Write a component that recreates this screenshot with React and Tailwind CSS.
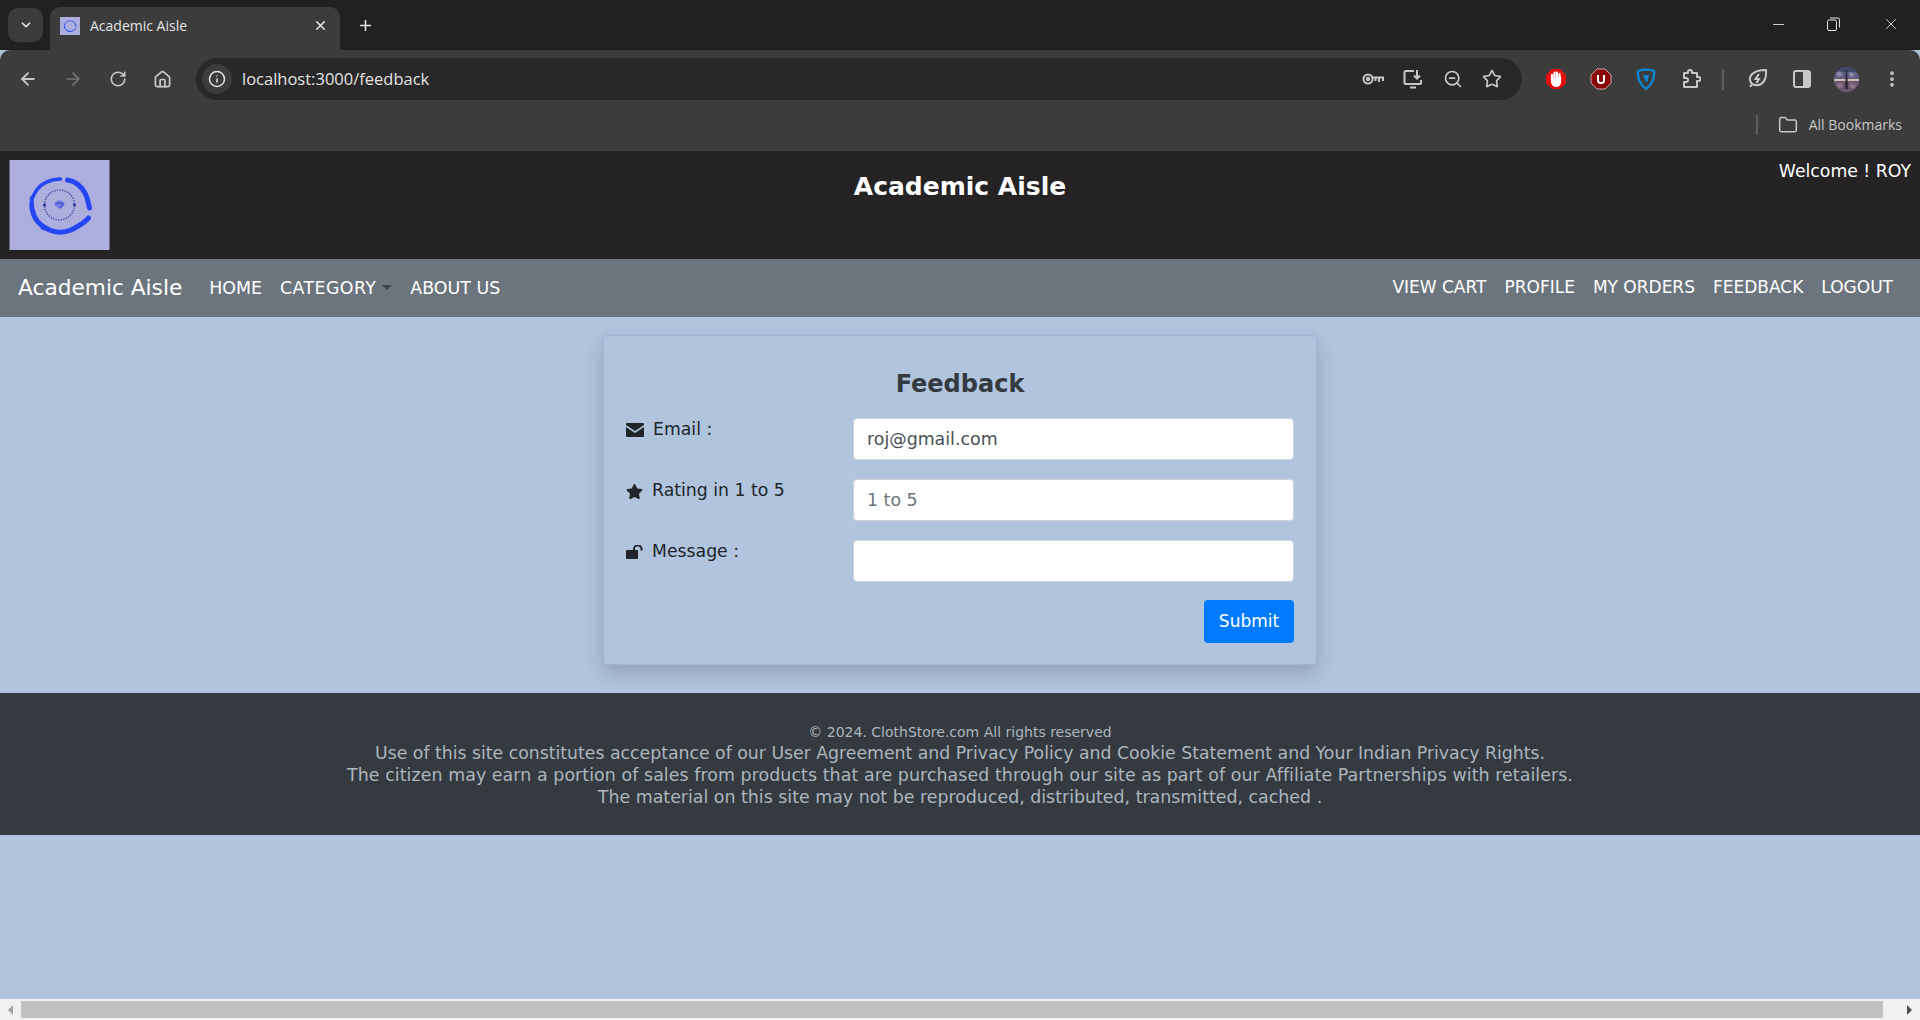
import { ArrowLeft, ArrowRight, RotateCw, Home, Info, Star, ZoomOut, Folder, ChevronDown, X, Plus, Minus, EllipsisVertical } from "lucide-react";
import { FaStar } from "react-icons/fa";

const pageFont = "font-['DejaVu_Sans',sans-serif]";

function LogoMark({ small }) {
  return (
    <svg viewBox="0 0 100 90" className={small ? "h-[20px] w-[20px]" : "h-[90px] w-[101px]"}>
      <rect width="100" height="90" fill="#adadde" />
      <g fill="none" stroke="#2546f5" strokeLinecap="round" className="blur-[0.5px]">
        <path d="M51 19 C42 19 31 23 26 32 C22 38 21 45 22 50" strokeWidth="3.5" />
        <path d="M23 50 C24 58 30 66 40 70 C49 74 60 72 67 67 C72 64 76 62 79 58" strokeWidth="5" />
        <path d="M58 20 C65 21 72 26 76 34 C79 40 79 45 80 48" strokeWidth="5" />
        <path d="M22 38 L23 48 M33 68 L48 72" strokeWidth="3.5" />
      </g>
      {!small && (
        <>
          <circle cx="50" cy="45" r="15" fill="none" stroke="#4f58ad" strokeWidth="1.6" strokeDasharray="1.4 1.2" />
          <circle cx="35" cy="45" r="1.4" fill="#1c2a8f" />
          <circle cx="65" cy="45" r="1.4" fill="#1c2a8f" />
          <ellipse cx="50" cy="44" rx="5" ry="3.5" fill="#6f7be0" />
          <path d="M46 44 Q50 41 54 44 Q52 49 49 48" fill="none" stroke="#3945c8" strokeWidth="1" />
        </>
      )}
    </svg>
  );
}

function TabStrip() {
  return (
    <div className="flex h-[50px] items-end bg-[#202222] pl-2 text-[#e3e3e3]">
      <div className="mb-[8px] flex h-[34px] w-[35px] items-center justify-center rounded-[10px] bg-[#3c3c3c]">
        <ChevronDown size={14} strokeWidth={3} />
      </div>
      <div className="ml-[7px] flex h-[43px] w-[290px] items-center rounded-t-[10px] bg-[#3c3c3c] pb-[6px] pl-[10px] pr-[12px]">
        <LogoMark small />
        <span className="ml-[10px] flex-1 font-['Open_Sans',sans-serif] text-[14px]">Academic Aisle</span>
        <X size={15} strokeWidth={2.5} />
      </div>
      <div className="mb-[16px] ml-[17px]"><Plus size={17} strokeWidth={2.2} /></div>
      <div className="mb-[17px] ml-auto flex items-center pr-[20px]">
        <Minus size={17} strokeWidth={1.3} />
        <svg width="13" height="14" viewBox="0 0 13 14" fill="none" stroke="#e3e3e3" className="ml-[40px]"><rect x="0.5" y="3" width="9" height="10.5" rx="1.5" /><path d="M3 1 h8 a1.5 1.5 0 0 1 1.5 1.5 v8" /></svg>
        <X size={18} strokeWidth={1.2} className="ml-[42px]" />
      </div>
    </div>
  );
}

function Cell({ w, children, className = "" }) {
  return <div className={`flex items-center justify-center ${w} ${className}`}>{children}</div>;
}

function Avatar() {
  return (
    <svg width="25" height="25" viewBox="0 0 25 25">
      <clipPath id="avatar-clip"><circle cx="12.5" cy="12.5" r="12.5" /></clipPath>
      <g clipPath="url(#avatar-clip)">
        <rect width="25" height="25" fill="#5f5f82" />
        <rect x="0" y="0" width="25" height="5" fill="#44466a" />
        <path d="M2 6 L6 4 L9 8 L4 10 Z M16 5 L21 7 L19 10 L15 9 Z" fill="#8d86a6" />
        <rect x="0" y="12" width="25" height="2" fill="#d2bdb4" />
        <rect x="0" y="14" width="25" height="11" fill="#6e5870" />
        <path d="M12 3 L13 3 L14 22 L11 22 Z" fill="#2c2638" />
        <path d="M3 17 L8 16 L9 20 L4 21 Z M16 16 L22 18 L20 22 L16 20 Z" fill="#8d7486" />
      </g>
    </svg>
  );
}

function Toolbar() {
  return (
    <div className="flex h-[59px] items-start rounded-t-[10px] bg-[#3c3c3c] pt-[8px] text-[#c7c7c7]">
      <div className="flex h-[42px] items-center pl-[5px]">
        <Cell w="w-[45px]"><ArrowLeft size={20} strokeWidth={2.2} /></Cell>
        <Cell w="w-[45px]"><ArrowRight size={20} strokeWidth={2} className="text-[#767676]" /></Cell>
        <Cell w="w-[45px]"><RotateCw size={18} strokeWidth={2.2} /></Cell>
        <Cell w="w-[45px]"><Home size={19} strokeWidth={2.2} /></Cell>
      </div>
      <div className="ml-[11px] flex h-[42px] w-[1326px] items-center rounded-full bg-[#282828] pl-[6px] pr-[10px]">
        <div className="flex h-[30px] w-[30px] items-center justify-center rounded-full bg-[#3c3c3c] text-[#e3e3e3]">
          <Info size={18} strokeWidth={2} />
        </div>
        <span className="ml-[10px] font-['Open_Sans',sans-serif] text-[16.5px] text-[#e3e3e3]">localhost:3000/feedback</span>
        <div className="ml-auto flex items-center">
          <Cell w="w-[40px]"><svg width="22" height="16" viewBox="0 0 22 16" fill="none" stroke="#c7c7c7" strokeWidth="2"><circle cx="6" cy="8" r="4.5" /><circle cx="6" cy="8" r="1.2" /><path d="M10.5 6.5 H21 V10 M17 6.5 V11 M13.5 6.5 V10" /></svg></Cell>
          <Cell w="w-[40px]"><svg width="20" height="20" viewBox="0 0 20 20" fill="none" stroke="#c7c7c7" strokeWidth="2"><path d="M11 2 H3 a1.5 1.5 0 0 0 -1.5 1.5 V14 a1 1 0 0 0 1 1 H17 a1 1 0 0 0 1 -1 V11 M14 1 V9 M11 6.5 L14 9.5 L17 6.5 M7 18.5 H13" /></svg></Cell>
          <Cell w="w-[39px]"><ZoomOut size={20} strokeWidth={2} /></Cell>
          <Cell w="w-[40px]"><Star size={20} strokeWidth={2} /></Cell>
        </div>
      </div>
      <div className="ml-[11px] flex h-[42px] items-center">
        <Cell w="w-[45px]"><svg width="22" height="22" viewBox="0 0 22 22"><polygon points="7,1 15,1 21,7 21,15 15,21 7,21 1,15 1,7" fill="#e30d0d" /><path d="M7 11 V7 M9.5 11 V4.5 M12 11 V4.5 M14.5 11 V6 M7 10 V14 Q8 18 11 18 Q15 18 15 13 V9" stroke="#fff" strokeWidth="2.2" fill="#fff" strokeLinecap="round" /></svg></Cell>
        <Cell w="w-[45px]"><svg width="22" height="22" viewBox="0 0 22 22"><polygon points="7,1 15,1 21,7 21,15 15,21 7,21 1,15 1,7" fill="#8a0505" stroke="#c9a5a5" /><path d="M8 7 V12.5 Q8 15 11 15 Q14 15 14 12.5 V7" fill="none" stroke="#fff" strokeWidth="2" /></svg></Cell>
        <Cell w="w-[45px]"><svg width="20" height="22" viewBox="0 0 20 22" fill="none"><path d="M2 3 Q10 0 18 3 Q19 14 10 21 Q1 14 2 3 Z" stroke="#0e86cf" strokeWidth="2.4" /><path d="M7 7 H13 L11.5 14 H10 Z" fill="#0e86cf" /></svg></Cell>
        <Cell w="w-[45px]"><svg width="20" height="20" viewBox="0 0 20 20" fill="none" stroke="#c7c7c7" strokeWidth="2" strokeLinejoin="round"><path d="M3 4 H7 V3 A2 2 0 0 1 11 3 V4 H16 V8 H17.5 A2 2 0 0 1 17.5 12 H16 V18 H3 V13 H5 A2 2 0 0 0 5 9 H3 Z" /></svg></Cell>
        <div className="ml-[9px] h-[21px] w-[2px] bg-[#5e5e5e]" />
        <Cell w="w-[45px]" className="ml-[11px]"><svg width="21" height="22" viewBox="0 0 21 22" fill="none" stroke="#c7c7c7" strokeWidth="2"><path d="M3 19 L5 16 C0 10 4 2 19 2 C20 14 13 20 5 16" /><path d="M12 6 L8.5 11 H12 L9.5 15" /></svg></Cell>
        <Cell w="w-[44px]"><svg width="18" height="18" viewBox="0 0 18 18"><rect x="1" y="1" width="16" height="16" rx="2" fill="none" stroke="#c7c7c7" strokeWidth="2" /><rect x="10" y="1" width="7" height="16" fill="#c7c7c7" /></svg></Cell>
        <Cell w="w-[45px]"><Avatar /></Cell>
        <Cell w="w-[45px]"><EllipsisVertical size={20} strokeWidth={2.5} /></Cell>
      </div>
    </div>
  );
}

function BookmarksBar() {
  return (
    <div className="flex h-[42px] items-start justify-end bg-[#3c3c3c] pr-[18px] pt-[6px] text-[#c7c7c7]">
      <div className="mr-[20px] h-[20px] w-[2px] bg-[#5e5e5e]" />
      <Folder size={20} strokeWidth={1.8} />
      <span className="ml-[11px] font-['Open_Sans',sans-serif] text-[14px] leading-[20px]">All Bookmarks</span>
    </div>
  );
}

function TopHeader() {
  return (
    <div className={`relative flex h-[108px] items-start bg-[#252324] pl-[9px] pt-[9px] text-white ${pageFont}`}>
      <LogoMark />
      <h3 className="absolute left-0 right-0 top-[18px] text-center text-[25px] font-bold leading-[36px]">Academic Aisle</h3>
      <div className="ml-auto pr-[9px] pt-[1px] text-[17.3px] leading-[20px]">Welcome ! ROY</div>
    </div>
  );
}

function NavBar() {
  const right = ["VIEW CART", "PROFILE", "MY ORDERS", "FEEDBACK", "LOGOUT"];
  return (
    <nav className={`flex h-[58px] items-center bg-[#6c757d] pl-[18px] pr-[18px] text-white ${pageFont}`}>
      <a className="mr-[18px] text-[21.7px]">Academic Aisle</a>
      <a className="px-[9px] text-[17.4px]">HOME</a>
      <a className="flex items-center px-[9px] text-[17.4px] tracking-[0.4px]">
        CATEGORY
        <span className="ml-[6px] h-0 w-0 border-x-[5px] border-t-[5px] border-x-transparent border-t-[#3f4549]" />
      </a>
      <a className="px-[9px] text-[17.4px]">ABOUT US</a>
      <div className="ml-auto flex">
        {right.map((t) => (
          <a key={t} className="px-[9px] text-[17px]">{t}</a>
        ))}
      </div>
    </nav>
  );
}

function Field({ icon, label, children }) {
  return (
    <div className="mb-[19px] flex items-start">
      <div className="-mt-[1px] flex h-[26px] w-[227px] items-center text-[17.3px] text-[#212529]">
        <span className="mr-[9px]">{icon}</span>
        {label}
      </div>
      {children}
    </div>
  );
}

const inputClass = "h-[42px] w-[441px] rounded-[4px] border border-[#ced4da] bg-white px-[13px] text-[17.4px] text-[#495057] placeholder:text-[#6c757d]";

function FeedbackCard() {
  return (
    <div className="h-[330px] w-[714px] rounded-[4px] border border-[#9fb3d0] bg-[#b0c4de] px-[22px] pt-[29px] shadow-[0_8px_20px_rgba(0,0,0,0.18)]">
      <h3 className="mb-[15px] text-center text-[24px] font-bold leading-[38px] text-[#343a40]">Feedback</h3>
      <Field
        icon={<svg width="18" height="14" viewBox="0 0 18 14" className="block"><path d="M0 1 Q0 0 1 0 H17 Q18 0 18 1 V2 L9 8 L0 2 Z M0 4 L9 10 L18 4 V13 Q18 14 17 14 H1 Q0 14 0 13 Z" fill="#212529" /></svg>}
        label="Email :"
      >
        <input readOnly value="roj@gmail.com" className={inputClass} />
      </Field>
      <Field icon={<FaStar size={17} color="#212529" className="block" />} label="Rating in 1 to 5">
        <input readOnly placeholder="1 to 5" className={inputClass} />
      </Field>
      <Field
        icon={<svg width="17" height="14" viewBox="0 0 17 14" className="block"><rect x="0" y="5" width="12" height="9" rx="1" fill="#212529" /><path d="M8 5.5 V4 A3.5 3.5 0 0 1 15.5 4 V5.5" fill="none" stroke="#212529" strokeWidth="2" /></svg>}
        label="Message :"
      >
        <input readOnly className={inputClass} />
      </Field>
      <div className="-mt-[1px] flex justify-end">
        <button className="h-[43px] w-[90px] rounded-[4px] bg-[#007bff] pt-[1px] text-[17px] text-white">Submit</button>
      </div>
    </div>
  );
}

function Footer() {
  return (
    <footer className={`flex h-[142px] flex-col items-center bg-[#343a40] pt-[29px] text-center text-[#adb5bd] ${pageFont}`}>
      <div className="text-[14px] leading-[20px]">© 2024. ClothStore.com All rights reserved</div>
      <div className="text-[17.3px] leading-[22px]">Use of this site constitutes acceptance of our User Agreement and Privacy Policy and Cookie Statement and Your Indian Privacy Rights.</div>
      <div className="text-[17.4px] leading-[22px] tracking-[0.07px]">The citizen may earn a portion of sales from products that are purchased through our site as part of our Affiliate Partnerships with retailers.</div>
      <div className="text-[17.4px] leading-[22px]">The material on this site may not be reproduced, distributed, transmitted, cached .</div>
    </footer>
  );
}

function ScrollBar() {
  return (
    <div className="flex h-[21px] items-center bg-[#f1f1f1] px-[8px]">
      <span className="h-0 w-0 border-y-[5px] border-r-[5px] border-y-transparent border-r-[#a3a3a3]" />
      <div className="ml-[8px] mr-[24px] h-[17px] flex-1 bg-[#c1c1c1]" />
      <span className="h-0 w-0 border-y-[5px] border-l-[5px] border-y-transparent border-l-[#505050]" />
    </div>
  );
}

export default function App() {
  return (
    <div className="flex h-screen flex-col overflow-hidden bg-[#b0c4de]">
      <TabStrip />
      <Toolbar />
      <BookmarksBar />
      <TopHeader />
      <NavBar />
      <main className={`flex h-[376px] justify-center pt-[18px] ${pageFont}`}>
        <FeedbackCard />
      </main>
      <Footer />
      <div className="flex-1" />
      <ScrollBar />
    </div>
  );
}
